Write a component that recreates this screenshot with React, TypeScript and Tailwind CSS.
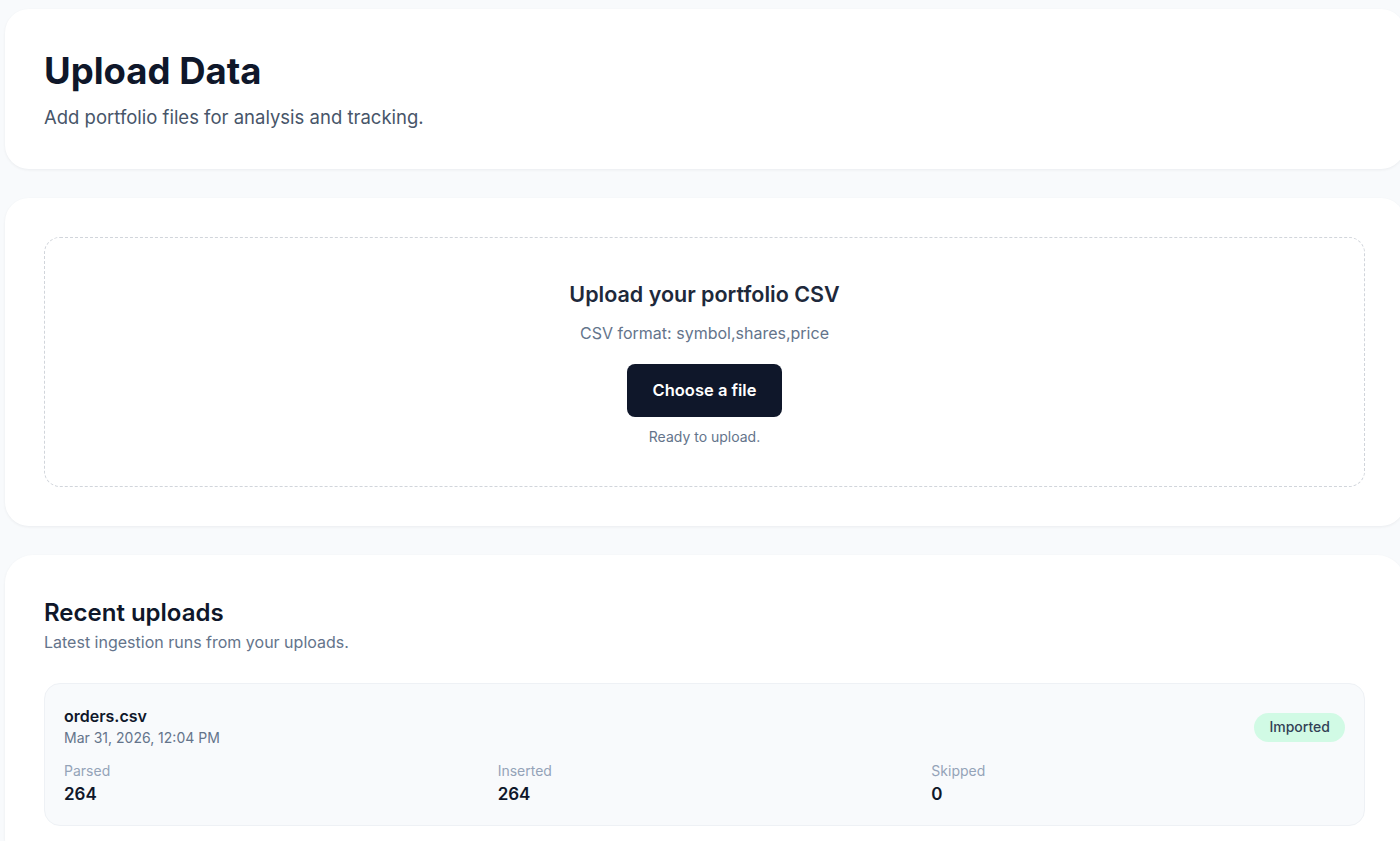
const stats = [
  { label: 'Parsed', value: '264' },
  { label: 'Inserted', value: '264' },
  { label: 'Skipped', value: '0' },
];

export default function App() {
  return (
    <div
      className="h-screen w-full overflow-hidden bg-[#f8fafc] pl-[5px] pt-[9px] text-[#0f172a]"
      style={{ fontFamily: 'Inter, "Noto Sans", sans-serif' }}
    >
      <div className="flex w-[1400px] flex-col gap-[29px]">
        <section className="h-[160px] rounded-[24px] bg-white px-[39px] pt-[40px] shadow-[0_1px_3px_rgba(15,23,42,0.06)]">
          <h1 className="text-[36.5px] leading-[44px] font-bold">Upload Data</h1>
          <p className="mt-[11px] text-[18.5px] leading-[26px] text-[#475569]">Add portfolio files for analysis and tracking.</p>
        </section>

        <section className="rounded-[24px] bg-white p-[39px] shadow-[0_1px_3px_rgba(15,23,42,0.06)]">
          <div className="flex h-[250px] w-[1321px] flex-col items-center rounded-[16px] border border-dashed border-[#d1d5db] pt-[42px]">
            <h2 className="text-[21.5px] leading-[28px] font-semibold text-[#1e293b]">Upload your portfolio CSV</h2>
            <p className="mt-[13px] text-[16px] leading-[24px] text-[#64748b]">CSV format: symbol,shares,price</p>
            <button className="mt-[19px] h-[53px] rounded-[8px] bg-[#0f172a] px-[26px] text-[16.5px] font-semibold text-white">
              Choose a file
            </button>
            <p className="mt-[10px] text-[14px] leading-[20px] text-[#64748b]">Ready to upload.</p>
          </div>
        </section>

        <section className="rounded-[28px] bg-white px-[39px] pt-[43px] pb-[40px] shadow-[0_1px_3px_rgba(15,23,42,0.06)]">
          <h2 className="text-[24px] leading-[30px] font-semibold">Recent uploads</h2>
          <p className="mt-[2px] text-[16px] leading-[24px] text-[#64748b]">Latest ingestion runs from your uploads.</p>
          <div className="mt-[29px] w-[1321px] rounded-[16px] border border-[#eef1f5] bg-[#f8fafc] px-[19px] pt-[22px] pb-[20px]">
            <div className="flex items-center justify-between">
              <div>
                <div className="text-[16px] leading-[20px] font-semibold">orders.csv</div>
                <div className="mt-[2px] text-[14px] leading-[20px] text-[#64748b]">Mar 31, 2026, 12:04 PM</div>
              </div>
              <span className="rounded-full bg-[#d1fae5] px-[15px] py-[4.5px] text-[14px] leading-[20px] font-medium text-[#334155]">
                Imported
              </span>
            </div>
            <div className="mt-[13px] grid grid-cols-3 gap-x-[20px]">
              {stats.map((s) => (
                <div key={s.label}>
                  <div className="text-[14px] leading-[20px] text-[#94a3b8]">{s.label}</div>
                  <div className="mt-[2px] text-[17px] leading-[22px] font-semibold">{s.value}</div>
                </div>
              ))}
            </div>
          </div>
        </section>
      </div>
    </div>
  );
}
